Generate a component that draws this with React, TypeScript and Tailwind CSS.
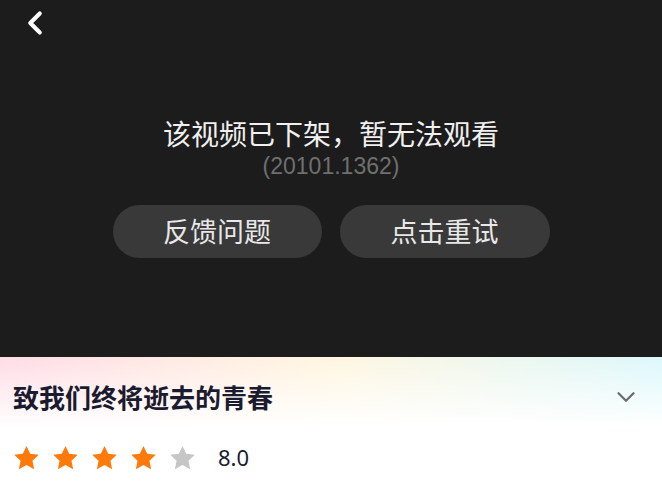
import { ChevronDown, ChevronLeft } from 'lucide-react'

const cjk = { fontFamily: '"Noto Sans CJK SC", "Noto Sans", sans-serif' }

function Star({ filled }: { filled: boolean }) {
  return (
    <svg width="27" height="26" viewBox="0 0 24 23">
      <path
        d="M12 0.8l3.3 7 7.6 0.9-5.6 5.2 1.5 7.6L12 17.7l-6.8 3.8 1.5-7.6L1.1 8.7l7.6-0.9z"
        fill={filled ? '#ff7a0a' : '#c6c6c6'}
      />
    </svg>
  )
}

export default function App() {
  return (
    <div className="flex h-[495px] w-[662px] flex-col overflow-hidden bg-white" style={cjk}>
      <div className="flex h-[357px] flex-col bg-[#1c1c1c]">
        <div className="flex h-[46px] items-center pl-[16px]">
          <ChevronLeft size={38} strokeWidth={2.6} color="#ffffff" />
        </div>
        <div className="mt-[67px] flex flex-col items-center">
          <div className="text-[28px] leading-[40px] text-[#f0f0f0]">该视频已下架，暂无法观看</div>
          <div
            className="text-[23px] leading-[26px] text-[#6f6f6f]"
            style={{ fontFamily: '"Liberation Sans", Arial, sans-serif' }}
          >
            (20101.1362)
          </div>
          <div className="mt-[26px] flex gap-[18px]">
            <button className="h-[53px] w-[209px] rounded-full bg-[#393939] text-[27px] text-[#e8e8e8]">
              反馈问题
            </button>
            <button className="h-[53px] w-[210px] rounded-full bg-[#393939] text-[27px] text-[#e8e8e8]">
              点击重试
            </button>
          </div>
        </div>
      </div>
      <div className="relative flex-1 bg-white">
        <div className="absolute inset-x-0 top-0 h-[70px] bg-gradient-to-r from-[#ffdbe6] via-[#fff6e0] to-[#dcf8fb]" />
        <div className="absolute inset-x-0 top-0 h-[70px] bg-gradient-to-b from-transparent to-white" />
        <div className="relative flex flex-col px-[13px]">
          <div className="mt-[24px] flex items-center justify-between">
            <div className="text-[26px] font-bold leading-[32px] text-[#1b1b2f]">致我们终将逝去的青春</div>
            <ChevronDown size={30} strokeWidth={1.8} color="#6b6b70" className="mr-[8px]" />
          </div>
          <div className="mt-[28px] flex items-center">
            <div className="flex gap-[12px]">
              <Star filled />
              <Star filled />
              <Star filled />
              <Star filled />
              <Star filled={false} />
            </div>
            <div className="ml-[22px] text-[22px] text-[#1b1b2f]" style={{ fontFamily: '"Noto Sans", sans-serif' }}>
              8.0
            </div>
          </div>
        </div>
      </div>
    </div>
  )
}
